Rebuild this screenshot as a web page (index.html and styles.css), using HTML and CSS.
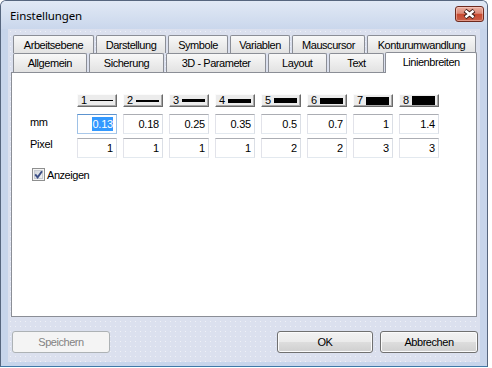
FILE: index.html
```html
<!DOCTYPE html>
<html lang="de">
<head>
<meta charset="utf-8">
<title>Einstellungen</title>
<link rel="stylesheet" href="styles.css">
</head>
<body>
<div class="window">
  <div class="titlebar">
    <span class="title">Einstellungen</span>
    <div class="close">
      <svg width="27" height="14" viewBox="0 0 27 14">
        <path d="M9 3.5 L18 10.5 M18 3.5 L9 10.5" stroke="#3d1a14" stroke-width="4.4" fill="none"/>
        <path d="M9.4 3.8 L17.6 10.2 M17.6 3.8 L9.4 10.2" stroke="#ffffff" stroke-width="2.4" fill="none"/>
      </svg>
    </div>
  </div>
  <div class="client">
    <div class="tabrow back">
      <div class="tab w-arb">Arbeitsebene</div>
      <div class="tab w-dar">Darstellung</div>
      <div class="tab w-sym">Symbole</div>
      <div class="tab w-var">Variablen</div>
      <div class="tab w-mau">Mauscursor</div>
      <div class="tab w-kon">Konturumwandlung</div>
    </div>
    <div class="tabrow front">
      <div class="tab w-all">Allgemein</div>
      <div class="tab w-sic">Sicherung</div>
      <div class="tab w-3d">3D - Parameter</div>
      <div class="tab w-lay">Layout</div>
      <div class="tab w-txt">Text</div>
      <div class="tab active w-lin">Linienbreiten</div>
    </div>
    <div class="panel">
      <div class="grid">
        <span></span>
        <div class="lbtn"><span class="num">1</span><span class="line t1"></span></div>
        <div class="lbtn"><span class="num">2</span><span class="line t2"></span></div>
        <div class="lbtn"><span class="num">3</span><span class="line t3"></span></div>
        <div class="lbtn"><span class="num">4</span><span class="line t4"></span></div>
        <div class="lbtn"><span class="num">5</span><span class="line t5"></span></div>
        <div class="lbtn"><span class="num">6</span><span class="line t6"></span></div>
        <div class="lbtn"><span class="num">7</span><span class="line t7"></span></div>
        <div class="lbtn"><span class="num">8</span><span class="line t8"></span></div>

        <span class="lbl lbl-mm">mm</span>
        <div class="tb focus"><span class="sel">0.13</span></div>
        <div class="tb">0.18</div>
        <div class="tb">0.25</div>
        <div class="tb">0.35</div>
        <div class="tb">0.5</div>
        <div class="tb">0.7</div>
        <div class="tb">1</div>
        <div class="tb">1.4</div>

        <span class="lbl">Pixel</span>
        <div class="tb">1</div>
        <div class="tb">1</div>
        <div class="tb">1</div>
        <div class="tb">1</div>
        <div class="tb">2</div>
        <div class="tb">2</div>
        <div class="tb">3</div>
        <div class="tb">3</div>
      </div>
      <div class="check">
        <svg width="13" height="13" viewBox="0 0 13 13">
          <defs>
            <linearGradient id="cbg" x1="0" y1="0" x2="1" y2="1">
              <stop offset="0" stop-color="#cfd3da"/>
              <stop offset="1" stop-color="#f6f6f7"/>
            </linearGradient>
          </defs>
          <rect x="0.5" y="0.5" width="12" height="12" fill="#f4f4f4" stroke="#8e8f8f"/>
          <rect x="2.5" y="2.5" width="8" height="8" fill="url(#cbg)" stroke="#c6cad0"/>
          <path d="M3.2 6.4 L5.6 9.4 L10 3.2" stroke="#3c4f86" stroke-width="1.9" fill="none"/>
        </svg>
        <span>Anzeigen</span>
      </div>
    </div>
    <div class="footer">
      <div class="btn disabled w-save">Speichern</div>
      <div class="btn w-ok">OK</div>
      <div class="btn w-cancel">Abbrechen</div>
    </div>
  </div>
</div>
</body>
</html>
```

FILE: styles.css
```css
body {
  margin: 0;
  background: #ffffff;
  font-family: "Liberation Sans", Arial, sans-serif;
  font-size: 11px;
  color: #000;
}

.window {
  box-sizing: border-box;
  width: 488px;
  height: 367px;
  border: 1px solid #56667e;
  border-bottom-color: #3f79a8;
  border-radius: 6px 6px 0 0;
  background: #c7d5eb;
  display: flex;
  flex-direction: column;
}

.titlebar {
  flex: none;
  height: 28px;
  display: flex;
  align-items: center;
  padding-left: 9px;
  border-radius: 5px 5px 0 0;
  background: linear-gradient(#e1e9f5, #cad7ec);
}

.title {
  font-family: "Noto Sans", "Liberation Sans", sans-serif;
  font-size: 11.5px;
  color: #000;
  letter-spacing: -0.1px;
}

.close {
  align-self: flex-start;
  margin: 5px 3px 0 auto;
  box-sizing: border-box;
  width: 29px;
  height: 16px;
  border: 1px solid #6e2a1e;
  border-radius: 3px;
  background: linear-gradient(#eab0a2 0%, #dc8a78 45%, #c8492f 52%, #c9604a 100%);
  box-shadow: inset 0 0 0 1px rgba(255, 220, 210, 0.45);
  display: flex;
  align-items: center;
  justify-content: center;
}

.client {
  flex: none;
  height: 333px;
  box-sizing: border-box;
  margin: 0 7px;
  padding: 6px 3px 0;
  background-color: #dbe0ee;
  background-image: radial-gradient(rgba(255, 255, 255, 0.55) 0.6px, transparent 0.9px);
  background-size: 5px 5px;
  display: flex;
  flex-direction: column;
}

.tabrow {
  display: flex;
  gap: 2px;
  padding-left: 2px;
}

.tabrow.back { height: 18px; }
.tabrow.front { height: 19px; align-items: flex-end; }

.tab {
  box-sizing: border-box;
  height: 100%;
  border: 1px solid #8b8e96;
  border-bottom: none;
  border-radius: 2px 2px 0 0;
  background: linear-gradient(#f8f8f8, #e2e2e2);
  display: flex;
  align-items: center;
  justify-content: center;
  letter-spacing: -0.45px;
  white-space: nowrap;
}

.tab.active {
  height: 21px;
  margin-bottom: -1px;
  margin-left: -1px;
  padding-bottom: 2px;
  background: #ffffff;
  position: relative;
  z-index: 1;
}

.w-arb { width: 81px; }
.w-dar { width: 70px; }
.w-sym { width: 60px; }
.w-var { width: 60px; }
.w-mau { width: 73px; }
.w-kon { width: 109px; }
.w-all { width: 74px; }
.w-sic { width: 76px; }
.w-3d  { width: 100px; }
.w-lay { width: 59px; }
.w-txt { width: 56px; }
.w-lin { width: 92px; }

.panel {
  box-sizing: border-box;
  height: 245px;
  border: 1px solid #8b8e96;
  background: #ffffff;
  padding: 21px 0 0 18px;
}

.grid {
  display: grid;
  grid-template-columns: 41px repeat(8, 40px);
  grid-template-rows: 16px 20px 20px;
  column-gap: 6px;
  row-gap: 4px;
}

.lbtn {
  align-self: start;
  box-sizing: border-box;
  height: 13px;
  display: flex;
  align-items: center;
  padding-left: 3px;
  background: #ececec;
  border: 1px solid;
  border-color: #fbfbfb #6b6b6b #6b6b6b #fbfbfb;
  box-shadow: inset -1px -1px 0 #a8a8a8;
  line-height: 11px;
}

.num {
  width: 7px;
  flex: none;
}

.line {
  flex: 1;
  margin: 0 3px 0 2px;
  background: #000;
}

.t1 { height: 1px; }
.t2 { height: 2px; }
.t3 { height: 3px; }
.t4 { height: 4px; }
.t5 { height: 5px; }
.t6 { height: 6px; }
.t7 { height: 8px; }
.t8 { height: 9px; }

.lbl {
  align-self: start;
  line-height: 13px;
  letter-spacing: -0.3px;
}

.lbl-mm { padding-top: 2px; }

.tb {
  box-sizing: border-box;
  height: 20px;
  border: 1px solid;
  border-color: #abadb3 #dbdfe6 #e3e9ef #e2e3ea;
  text-align: right;
  padding-right: 3px;
  line-height: 18px;
  letter-spacing: -0.2px;
}

.tb.focus {
  border-color: #5c93cf #9ec1e6 #a9c8ea #9ec1e6;
}

.sel {
  background: #3399ff;
  color: #ffffff;
  padding: 1px 0;
}

.check {
  display: flex;
  align-items: center;
  gap: 2px;
  margin: 10px 0 0 2px;
  letter-spacing: -0.45px;
}

.footer {
  display: flex;
  margin: 14px -3px 0;
  padding: 0 2px 0 4px;
}

.btn {
  box-sizing: border-box;
  height: 22px;
  border: 1px solid #707070;
  border-radius: 3px;
  background: linear-gradient(#f2f2f2 0%, #ebebeb 48%, #dddddd 52%, #cfcfcf 100%);
  box-shadow: inset 0 0 0 1px #fbfbfb;
  display: flex;
  align-items: center;
  justify-content: center;
  letter-spacing: -0.45px;
}

.btn.disabled {
  border-color: #adb2b5;
  background: #f4f4f4;
  box-shadow: none;
  color: #838383;
}

.w-save { width: 98px; }
.w-ok { width: 96px; margin-left: auto; }
.w-cancel { width: 98px; margin-left: 7px; }
```
